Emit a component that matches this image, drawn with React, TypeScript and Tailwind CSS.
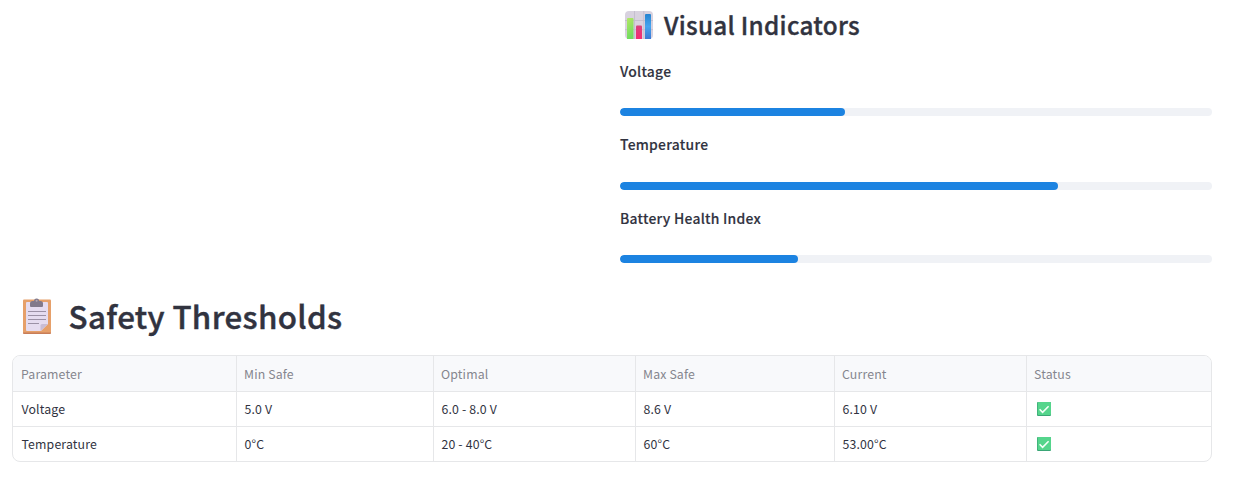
import React from "react";

const indicators = [
  { label: "Voltage", value: 38, box: "h-[74px]", text: "pt-1" },
  { label: "Temperature", value: 74, box: "h-[73px]", text: "pt-[3px]" },
  { label: "Battery Health Index", value: 30, box: "h-[73px]", text: "pt-1" },
];

const columns = ["Parameter", "Min Safe", "Optimal", "Max Safe", "Current", "Status"];

const rows = [
  ["Voltage", "5.0 V", "6.0 - 8.0 V", "8.6 V", "6.10 V"],
  ["Temperature", "0°C", "20 - 40°C", "60°C", "53.00°C"],
];

function ChartIcon() {
  return (
    <svg width="28" height="28" viewBox="0 0 28 28" className="shrink-0" aria-hidden="true">
      <defs>
        <linearGradient id="green" x1="0" y1="0" x2="0.3" y2="1">
          <stop offset="0" stopColor="#b4e765" />
          <stop offset="1" stopColor="#70dc60" />
        </linearGradient>
        <linearGradient id="pink" x1="0" y1="0" x2="0" y2="1">
          <stop offset="0" stopColor="#d9427c" />
          <stop offset="1" stopColor="#f52b73" />
        </linearGradient>
        <linearGradient id="blue" x1="0" y1="0" x2="0" y2="1">
          <stop offset="0" stopColor="#2583d0" />
          <stop offset="0.5" stopColor="#45a4ef" />
          <stop offset="1" stopColor="#3b78d4" />
        </linearGradient>
      </defs>
      <rect width="28" height="28" rx="4" fill="#d8d2df" />
      <path d="M9.500 0v28M18.800 0v28M0 9.500h28M0 18.700h28" stroke="#c3bccd" strokeWidth="0.900" />
      <path d="M2 28V8a1 1 0 0 1 1-1h4.500a1 1 0 0 1 1 1v20z" fill="url(#green)" />
      <path d="M11 28V15.500a1 1 0 0 1 1-1h4a1 1 0 0 1 1 1V28z" fill="url(#pink)" />
      <path d="M20 28V4a1 1 0 0 1 1-1h4a1 1 0 0 1 1 1v24z" fill="url(#blue)" />
    </svg>
  );
}

function ClipboardIcon() {
  return (
    <svg width="28" height="36" viewBox="0 0 28 36" className="shrink-0" aria-hidden="true">
      <rect y="1.500" width="28" height="34" rx="1" fill="#e6a06a" />
      <path d="M0 34.500h28v.5a1 1 0 0 1-1 1H1a1 1 0 0 1-1-1z" fill="#c87d58" />
      <path d="M4 4h20a1 1 0 0 1 1 1v21l-7 7H4a1 1 0 0 1-1-1V5a1 1 0 0 1 1-1z" fill="#e5dcf0" />
      <path d="M17.500 33v-5.500a1.500 1.500 0 0 1 1.500-1.500h6z" fill="#c9bdd5" />
      <path d="M5 13.500h18M5 17.500h18M5 21.500h18M5 25.500h11" stroke="#9b91a6" strokeWidth="1" />
      <path d="M7 8V5.500A2.500 2.500 0 0 1 9.500 3H11a2.600 2.600 0 0 1 5.200 0h1.300A2.500 2.500 0 0 1 20 5.500V8a1 1 0 0 1-1 1H8a1 1 0 0 1-1-1z" fill="#81798b" />
      <circle cx="13.600" cy="2.800" r="1" fill="#b5a8b2" />
    </svg>
  );
}

function CheckIcon() {
  return (
    <svg width="14" height="14" viewBox="0 0 14 14" className="ml-[3px] block" aria-hidden="true">
      <rect width="14" height="14" rx="1" fill="#3aa676" />
      <rect x="0.700" width="13.300" height="13" rx="1" fill="#55d58c" />
      <path d="M2.600 7.300l3 3 6-6.100" fill="none" stroke="#f4fff8" strokeWidth="1.600" />
    </svg>
  );
}

export default function App() {
  return (
    <main className="h-[491px] w-[1257px] overflow-hidden bg-white pl-3 font-['Noto_Sans_CJK_SC',sans-serif] text-[#31333f]">
      <section className="ml-[608px] h-[283px] w-[592px]">
        <h3 className="flex h-[55px] items-start pl-[5px] pt-[11px] text-[24.300px] font-medium leading-7 tracking-[0.280px] [-webkit-text-stroke:0.350px_#31333f]">
          <ChartIcon />
          <span className="ml-[11px] whitespace-nowrap">Visual Indicators</span>
        </h3>
        {indicators.map((item) => (
          <div key={item.label} className={item.box}>
            <p className={`h-[53px] text-[13.900px] font-medium leading-6 tracking-[0.250px] [-webkit-text-stroke:0.150px_#31333f] ${item.text}`}>
              {item.label}
            </p>
            <div className="h-2 overflow-hidden rounded-full bg-[#f0f2f6]">
              <div className="h-2 rounded-full bg-[#1c83e1]" style={{ width: `${item.value}%` }} />
            </div>
          </div>
        ))}
      </section>
      <section className="w-[1200px]">
        <h2 className="flex h-[72px] items-start pl-[11px] pt-[15px] text-[31.300px] font-medium leading-9 tracking-[0.350px] [-webkit-text-stroke:0.450px_#31333f]">
          <ClipboardIcon />
          <span className="ml-[17.600px] whitespace-nowrap">Safety Thresholds</span>
        </h2>
        <div className="h-[107px] overflow-hidden rounded-lg border border-[#e6e7e9] text-[12.300px] tracking-[0.150px]">
          <table className="w-full table-fixed border-separate border-spacing-0">
            <colgroup>
              <col className="w-[224px]" />
              <col className="w-[197px]" />
              <col className="w-[202px]" />
              <col className="w-[199px]" />
              <col className="w-[192px]" />
              <col className="w-[184px]" />
            </colgroup>
            <thead>
              <tr className="h-9 bg-[#f8f9fb] text-left text-[#85868e]">
                {columns.map((name) => (
                  <th key={name} className="border-b border-r border-[#e6e7e9] py-0 pl-[7px] font-normal leading-5 first:pl-2 last:border-r-0">
                    {name}
                  </th>
                ))}
              </tr>
            </thead>
            <tbody>
              {rows.map((row) => (
                <tr key={row[0]} className="group h-[35px]">
                  {row.map((cell) => (
                    <td key={cell} className="border-b border-r border-[#e6e7e9] py-0 pl-[7.500px] leading-5 first:pl-[8.500px] group-last:border-b-0 group-last:pb-px">
                      {cell}
                    </td>
                  ))}
                  <td className="border-b border-[#e6e7e9] py-0 pl-[7px] group-last:border-b-0 group-last:pb-px">
                    <CheckIcon />
                  </td>
                </tr>
              ))}
            </tbody>
          </table>
        </div>
      </section>
    </main>
  );
}
